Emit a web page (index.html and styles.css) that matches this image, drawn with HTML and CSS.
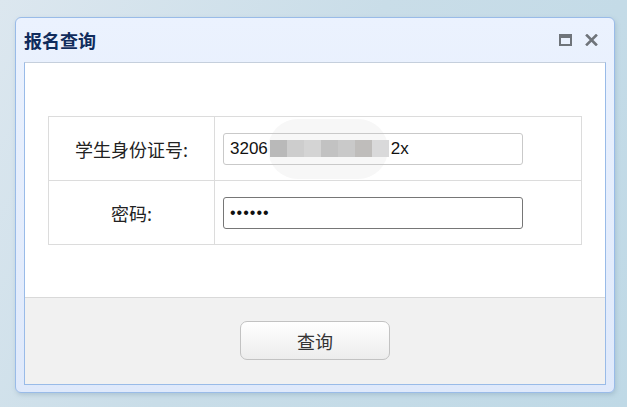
FILE: index.html
```html
<!DOCTYPE html>
<html lang="zh-CN">
<head>
<meta charset="utf-8">
<title>报名查询</title>
<link rel="stylesheet" href="styles.css">
</head>
<body>
<div class="window">
  <div class="win-header">
    <span class="win-title">报名查询</span>
    <div class="win-tools">
      <svg class="tool" width="13" height="12" viewBox="0 0 13 12"><rect x="1" y="1" width="11" height="10" fill="none" stroke="#6f747a" stroke-width="2"/><rect x="1" y="1" width="11" height="3" fill="#6f747a"/></svg>
      <svg class="tool" width="13" height="12" viewBox="0 0 13 12"><path d="M2 1.5 L11 10.5 M11 1.5 L2 10.5" stroke="#6f747a" stroke-width="2.6" stroke-linecap="square"/></svg>
    </div>
  </div>
  <div class="panel">
    <div class="panel-body">
      <table class="form-table">
        <tr>
          <td class="label">学生身份证号:</td>
          <td class="field">
            <div class="text-input">
              <span>3206</span><span class="mosaic"><i class="m1"></i><i class="m2"></i><i class="m3"></i><i class="m4"></i><i class="m5"></i><i class="m6"></i><i class="m7"></i></span><span>2x</span>
            </div>
            <div class="blob"></div>
          </td>
        </tr>
        <tr>
          <td class="label">密码:</td>
          <td class="field"><input class="pwd" type="password" value="123456"></td>
        </tr>
      </table>
    </div>
    <div class="panel-footer">
      <button class="btn" type="button">查询</button>
    </div>
  </div>
</div>
</body>
</html>
```
FILE: styles.css
```css
html, body {
  margin: 0;
  padding: 0;
}
body {
  width: 627px;
  height: 407px;
  overflow: hidden;
  background: linear-gradient(120deg, #dce7ef 0%, #c9dde8 45%, #bfd9e6 100%);
  font-family: "Liberation Sans", "Noto Sans CJK SC", sans-serif;
  padding-top: 17px;
  padding-left: 15px;
  box-sizing: border-box;
}
.window {
  width: 600px;
  height: 376px;
  box-sizing: border-box;
  border: 1px solid #99bbe8;
  border-radius: 6px;
  background: linear-gradient(180deg, #ebf2fe 0%, #dfe9fb 100%);
  padding: 0 8px 7px 8px;
  display: flex;
  flex-direction: column;
  box-shadow: 1px 2px 4px rgba(120, 150, 170, 0.35);
}
.win-header {
  height: 44px;
  display: flex;
  align-items: center;
  justify-content: space-between;
  box-sizing: border-box;
}
.win-title {
  font-family: "Noto Sans CJK SC", sans-serif;
  font-weight: bold;
  font-size: 18px;
  color: #102c5c;
  margin-left: 0;
}
.win-tools {
  display: flex;
  gap: 13px;
  margin-right: 8px;
}
.tool {
  display: block;
}
.panel {
  flex: 1;
  display: flex;
  flex-direction: column;
  border: 1px solid #99bbe8;
  border-top-color: #c5cfdc;
  background: #fff;
}
.panel-body {
  height: 234px;
  box-sizing: border-box;
  padding: 53px 23px 0 23px;
}
.form-table {
  width: 100%;
  border-collapse: collapse;
}
.form-table td {
  border: 1px solid #dcdcdc;
  height: 63px;
  padding: 0;
}
.label {
  width: 165px;
  text-align: center;
  font-family: "Noto Sans CJK SC", sans-serif;
  font-size: 18px;
  color: #222;
}
.field {
  position: relative;
  padding-left: 8px !important;
}
.text-input,
.pwd {
  position: relative;
  z-index: 2;
  width: 300px;
  height: 32px;
  box-sizing: border-box;
  border-radius: 3px;
  font-family: "Liberation Sans", sans-serif;
  font-size: 17px;
  color: #111;
  padding: 0 6px;
}
.text-input {
  border: 1px solid #c9c9c9;
  display: flex;
  align-items: center;
  background: transparent;
}
.pwd {
  display: block;
  border: 1px solid #767676;
  outline: none;
  font-size: 16px;
  letter-spacing: 1px;
}
.mosaic {
  display: flex;
  height: 17px;
  margin: 0 2px 0 2px;
}
.mosaic i {
  display: block;
  width: 17px;
  height: 17px;
}
.m1 { background: #b9b9b9; }
.m2 { background: #cdcdcd; }
.m3 { background: #d4d4d4; }
.m4 { background: #c2c2c2; }
.m5 { background: #c9c9c9; }
.m6 { background: #bfbdbb; }
.m7 { background: #d9d9da; }
.blob {
  position: absolute;
  z-index: 1;
  left: 53px;
  top: 2px;
  width: 120px;
  height: 60px;
  border-radius: 30px;
  background: #f7f7f7;
}
.panel-footer {
  flex: 1;
  background: #f1f1f1;
  border-top: 1px solid #d9d9d9;
  display: flex;
  justify-content: center;
  padding-top: 23px;
  box-sizing: border-box;
}
.btn {
  width: 150px;
  height: 39px;
  border: 1px solid #c2c2c2;
  border-radius: 7px;
  background: linear-gradient(180deg, #ffffff 0%, #ececec 100%);
  font-family: "Noto Sans CJK SC", sans-serif;
  font-size: 18px;
  color: #333;
  padding: 0;
}
```
